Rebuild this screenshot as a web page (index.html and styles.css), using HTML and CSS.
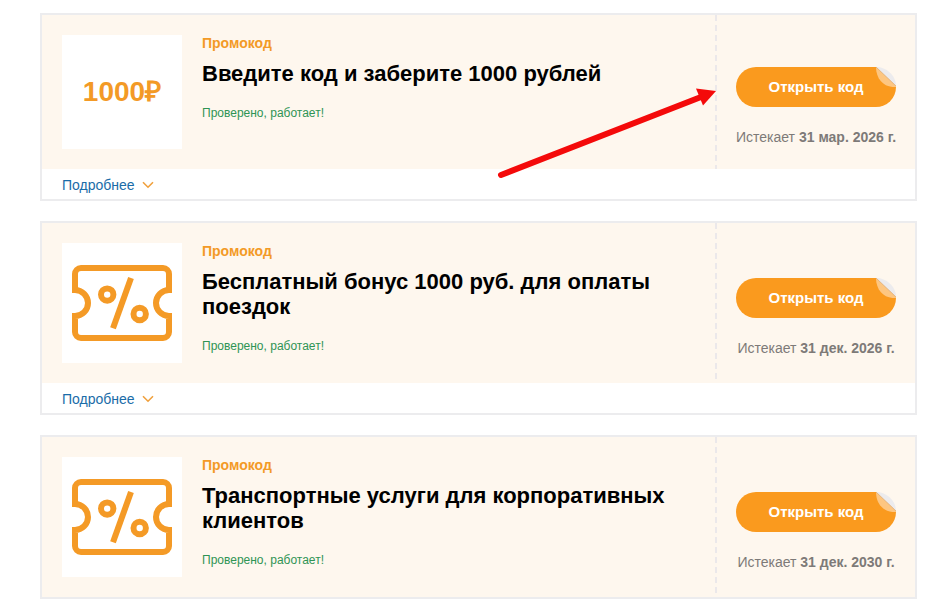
FILE: index.html
```html
<!DOCTYPE html>
<html lang="ru">
<head>
    <meta charset="UTF-8">
    <meta name="viewport" content="width=device-width, initial-scale=1.0">
    <title>Промокоды</title>
    <link rel="stylesheet" href="styles.css">
</head>
<body>
    <svg width="0" height="0" class="sprite">
        <symbol id="ticket" viewBox="0 0 120 120">
            <g fill="none" stroke="#f49a26" stroke-width="6">
                <path d="M19 25H101A6 6 0 0 1 107 31V47A13 13 0 0 0 107 73V89A6 6 0 0 1 101 95H19A6 6 0 0 1 13 89V73A13 13 0 0 0 13 47V31A6 6 0 0 1 19 25Z"/>
                <circle cx="45.2" cy="51.6" r="6.2"/>
                <circle cx="77.7" cy="71" r="6.2"/>
                <path d="M69 35L51 85.3"/>
            </g>
        </symbol>
        <symbol id="chevron" viewBox="0 0 12 8">
            <path d="M1 1.2L6 6.2L11 1.2" fill="none" stroke="#f0a03c" stroke-width="1.6"/>
        </symbol>
        <symbol id="peel" viewBox="0 0 20 20">
            <path d="M0 0H20V20Z" fill="#fef7ee"/>
            <path d="M0 0C0 13 9 21 20 20L17 15Z" fill="#fdc681"/>
            <path d="M0 0C10 0 20 8 20 19Z" fill="#ecebed"/>
            <path d="M0 0L20 19" stroke="#e0ab70" stroke-width="0.8"/>
        </symbol>
    </svg>

    <div class="coupons">
        <div class="coupon">
            <div class="coupon-main">
                <div class="coupon-thumb coupon-thumb-sum">1000₽</div>
                <div class="coupon-info">
                    <div class="coupon-type">Промокод</div>
                    <h3 class="coupon-title">Введите код и заберите 1000 рублей</h3>
                    <div class="coupon-status">Проверено, работает!</div>
                </div>
                <div class="coupon-action">
                    <a class="coupon-btn">Открыть код<svg class="coupon-peel"><use href="#peel"/></svg></a>
                    <div class="coupon-expire">Истекает <b>31 мар. 2026 г.</b></div>
                </div>
            </div>
            <div class="coupon-more">
                <span>Подробнее</span>
                <svg class="coupon-chevron"><use href="#chevron"/></svg>
            </div>
            <svg class="arrow" viewBox="0 0 224 96">
                <path d="M6 89L206 11" stroke="#f40a0a" stroke-width="6" stroke-linecap="round"/>
                <path d="M221 5L201 2.5L208 19.5Z" fill="#f40a0a"/>
            </svg>
        </div>

        <div class="coupon">
            <div class="coupon-main">
                <div class="coupon-thumb"><svg class="coupon-ticket"><use href="#ticket"/></svg></div>
                <div class="coupon-info">
                    <div class="coupon-type">Промокод</div>
                    <h3 class="coupon-title">Бесплатный бонус 1000 руб. для оплаты поездок</h3>
                    <div class="coupon-status">Проверено, работает!</div>
                </div>
                <div class="coupon-action">
                    <a class="coupon-btn">Открыть код<svg class="coupon-peel"><use href="#peel"/></svg></a>
                    <div class="coupon-expire">Истекает <b>31 дек. 2026 г.</b></div>
                </div>
            </div>
            <div class="coupon-more">
                <span>Подробнее</span>
                <svg class="coupon-chevron"><use href="#chevron"/></svg>
            </div>
        </div>

        <div class="coupon">
            <div class="coupon-main">
                <div class="coupon-thumb"><svg class="coupon-ticket"><use href="#ticket"/></svg></div>
                <div class="coupon-info">
                    <div class="coupon-type">Промокод</div>
                    <h3 class="coupon-title">Транспортные услуги для корпоративных клиентов</h3>
                    <div class="coupon-status">Проверено, работает!</div>
                </div>
                <div class="coupon-action">
                    <a class="coupon-btn">Открыть код<svg class="coupon-peel"><use href="#peel"/></svg></a>
                    <div class="coupon-expire">Истекает <b>31 дек. 2030 г.</b></div>
                </div>
            </div>
        </div>
    </div>
</body>
</html>
```
FILE: styles.css
```css
* {
    margin: 0;
    padding: 0;
    box-sizing: border-box;
}

body {
    font-family: "Liberation Sans", Arial, sans-serif;
    background: #fff;
    color: #000;
}

.sprite {
    display: block;
}

.coupons {
    display: flex;
    flex-direction: column;
    gap: 20px;
    width: 877px;
    margin: 13px 0 0 40px;
}

.coupon {
    position: relative;
    border: 2px solid #ececee;
}

.coupon-main {
    display: flex;
    min-height: 154px;
    background: #fef7ee;
}

.coupon-thumb {
    display: flex;
    align-items: center;
    justify-content: center;
    width: 120px;
    min-height: 114px;
    margin: 20px;
    background: #fff;
}

.coupon-thumb-sum {
    padding-bottom: 4px;
    color: #f39a26;
    font-size: 28px;
    font-weight: bold;
}

.coupon-ticket {
    display: block;
    width: 120px;
    height: 120px;
}

.coupon-info {
    flex: 1;
    padding: 20px 20px 0 0;
}

.coupon-type {
    color: #f39a26;
    font-size: 14px;
    font-weight: bold;
    line-height: 16px;
}

.coupon-title {
    margin-top: 10px;
    font-size: 22px;
    line-height: 25px;
}

.coupon-status {
    margin-top: 20px;
    color: #2f9454;
    font-size: 12px;
    line-height: 14px;
}

.coupon-action {
    display: flex;
    flex-direction: column;
    align-items: center;
    justify-content: center;
    width: 200px;
    padding: 28px 0 0 2px;
    background: repeating-linear-gradient(to bottom, #ebe8ea 0 6px, transparent 6px 10px) left top / 2px 100% no-repeat;
}

.coupon-btn {
    position: relative;
    width: 160px;
    height: 40px;
    border-radius: 20px;
    background: #fa9a1e;
    color: #fff;
    font-size: 15px;
    font-weight: bold;
    line-height: 40px;
    text-align: center;
}

.coupon-peel {
    position: absolute;
    top: 0;
    right: 0;
    width: 20px;
    height: 20px;
}

.coupon-expire {
    margin-top: 22px;
    color: #7d7a78;
    font-size: 14px;
    line-height: 16px;
    white-space: nowrap;
}

.coupon-more {
    display: flex;
    align-items: center;
    gap: 7px;
    height: 30px;
    padding: 2px 0 0 20px;
    color: #1a6ca8;
    font-size: 14px;
}

.coupon-chevron {
    width: 12px;
    height: 8px;
}

/* pointer to the button */
.arrow {
    position: absolute;
    left: 453px;
    top: 71px;
    width: 224px;
    height: 96px;
}
```
